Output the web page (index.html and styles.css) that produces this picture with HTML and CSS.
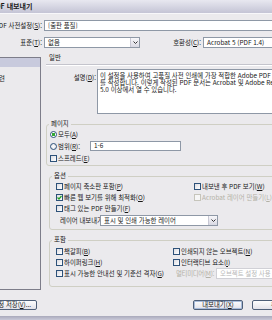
FILE: index.html
```html
<!DOCTYPE html>
<html lang="ko">
<head>
    <meta charset="UTF-8">
    <title>Adobe PDF 내보내기</title>
    <link rel="stylesheet" href="styles.css">
</head>
<body>
    <div class="dialog">
        <div class="titlebar">Adobe PDF 내보내기</div>
        <div class="head-row preset-row">
            <label class="head-label">Adobe PDF 사전설정(<u>S</u>):</label>
            <div class="textbox preset">[출판 품질]</div>
        </div>
        <div class="head-row std-row">
            <label class="head-label">표준(<u>T</u>):</label>
            <div class="select standard">
                <span class="select-text">없음</span>
                <span class="select-btn"><svg width="5" height="3" viewBox="0 0 5 3"><path d="M0.5 0.5 L2.5 2.5 L4.5 0.5" fill="none" stroke="#333" stroke-width="1"/></svg></span>
            </div>
            <label class="compat-label">호환성(<u>C</u>):</label>
            <div class="select compat">
                <span class="select-text">Acrobat 5 (PDF 1.4)</span>
                <span class="select-btn"><svg width="5" height="3" viewBox="0 0 5 3"><path d="M0.5 0.5 L2.5 2.5 L4.5 0.5" fill="none" stroke="#333" stroke-width="1"/></svg></span>
            </div>
        </div>
        <div class="main">
            <ul class="nav">
                <li class="selected">일반</li>
                <li>압축</li>
                <li>표시 및 도련</li>
                <li>출력</li>
                <li>고급</li>
                <li>보안</li>
                <li>요약</li>
            </ul>
            <div class="pane">
                <div class="pane-title">일반</div>
                <div class="desc-row">
                    <label class="desc-label">설명(<u>D</u>):</label>
                    <div class="textarea">이 설정을 사용하여 고품질 사전 인쇄에 가장 적합한 Adobe PDF 문서<br>를 작성합니다. 이렇게 작성된 PDF 문서는 Acrobat 및 Adobe Reader<br>5.0 이상에서 열 수 있습니다.</div>
                </div>
                <fieldset class="group pages">
                    <legend>페이지</legend>
                    <div class="prow"><span class="radio on"></span>모두(<u>A</u>)</div>
                    <div class="prow"><span class="radio"></span><span class="range-label">범위(<u>R</u>):</span><div class="textbox range">1-6</div></div>
                    <div class="prow"><span class="check"></span>스프레드(<u>E</u>)</div>
                </fieldset>
                <fieldset class="group options">
                    <legend>옵션</legend>
                    <div class="opt-grid">
                        <div class="opt"><span class="check"></span>페이지 축소판 포함(<u>P</u>)</div>
                        <div class="opt"><span class="check"></span>내보낸 후 PDF 보기(<u>W</u>)</div>
                        <div class="opt"><span class="check"><svg width="5" height="5" viewBox="0 0 5 5"><path d="M0.5 2.5 L2 4 L4.5 1" fill="none" stroke="#21a121" stroke-width="1.2"/></svg></span>빠른 웹 보기를 위해 최적화(<u>O</u>)</div>
                        <div class="opt disabled"><span class="check"></span>Acrobat 레이어 만들기(<u>L</u>)</div>
                        <div class="opt first-col"><span class="check"></span>태그 있는 PDF 만들기(<u>F</u>)</div>
                        <div class="opt layer-row">
                            <span class="layer-label">레이어 내보내기:</span>
                            <div class="select layers">
                                <span class="select-text">표시 및 인쇄 가능한 레이어</span>
                                <span class="select-btn"><svg width="5" height="3" viewBox="0 0 5 3"><path d="M0.5 0.5 L2.5 2.5 L4.5 0.5" fill="none" stroke="#333" stroke-width="1"/></svg></span>
                            </div>
                        </div>
                    </div>
                </fieldset>
                <fieldset class="group include">
                    <legend>포함</legend>
                    <div class="inc-grid">
                        <div class="opt"><span class="check"></span>책갈피(<u>B</u>)</div>
                        <div class="opt"><span class="check"></span>인쇄되지 않는 오브젝트(<u>N</u>)</div>
                        <div class="opt"><span class="check"></span>하이퍼링크(<u>H</u>)</div>
                        <div class="opt"><span class="check"></span>인터랙티브 요소(<u>I</u>)</div>
                        <div class="opt"><span class="check"></span>표시 가능한 안내선 및 기준선 격자(<u>G</u>)</div>
                        <div class="opt disabled">
                            <span class="media-label">멀티미디어(<u>M</u>):</span>
                            <div class="select media">
                                <span class="select-text">오브젝트 설정 사용</span>
                                <span class="select-btn"></span>
                            </div>
                        </div>
                    </div>
                </fieldset>
            </div>
        </div>
        <div class="footer">
            <button class="btn save">사전 설정 저장(<u>V</u>)...</button>
            <button class="btn export default">내보내기(<u>X</u>)</button>
            <button class="btn cancel">취소</button>
        </div>
        <div class="frame-bottom"></div>
    </div>
</body>
</html>
```

FILE: styles.css
```css
html, body {
    margin: 0;
    padding: 0;
    overflow: hidden;
    background-color: #ebeaed;
}
.dialog {
    width: 350px;
    height: 320px;
    margin-left: -40px;
    display: flex;
    flex-direction: column;
    font-family: "Noto Sans CJK KR", "Noto Sans", sans-serif;
    font-size: 6.4px;
    color: #161616;
    background-color: #ebeaed;
}
.titlebar {
    height: 13px;
    line-height: 13px;
    padding-left: 7px;
    font-size: 7px;
    font-weight: bold;
    color: #1a1a1a;
    background: linear-gradient(#e8e8f0, #c4c4d5);
    border-bottom: 1px solid #f7f7fa;
    flex: none;
}
.head-row {
    display: flex;
    align-items: center;
    height: 11px;
    margin-top: 6px;
    flex: none;
}
.head-label {
    width: 84px;
    text-align: right;
    padding-right: 2px;
    box-sizing: border-box;
    white-space: nowrap;
}
.textbox {
    background-color: #fff;
    border: 1px solid #8e98a6;
    height: 11px;
    box-sizing: border-box;
    line-height: 9px;
    padding-left: 3px;
    white-space: nowrap;
}
.preset {
    flex: 1;
    margin-right: 4px;
}
.select {
    display: flex;
    height: 11px;
    box-sizing: border-box;
    background-color: #fff;
    border: 1px solid #8e98a6;
    white-space: nowrap;
}
.select-text {
    flex: 1;
    padding-left: 3px;
    line-height: 9px;
    overflow: hidden;
}
.select-btn {
    width: 8px;
    display: flex;
    align-items: center;
    justify-content: center;
    background: linear-gradient(#f7f7fa, #d9d9e3);
    border-left: 1px solid #c8c8d4;
}
.standard {
    width: 96px;
}
.compat-label {
    width: 63px;
    text-align: right;
    padding-right: 2px;
    box-sizing: border-box;
    white-space: nowrap;
}
.compat {
    flex: 1;
    margin-right: 4px;
}
.main {
    display: flex;
    margin-top: 4px;
    height: 240px;
    flex: none;
}
.nav {
    list-style: none;
    margin: 5px 0 0 8px;
    padding: 0;
    width: 73px;
    height: 233px;
    box-sizing: border-box;
    border: 1px solid #7d7d8a;
}
.nav li {
    height: 8.5px;
    line-height: 8.5px;
    padding-left: 3px;
    white-space: nowrap;
}
.nav li.selected {
    background-color: #c8cadd;
}
.pane {
    flex: 1;
    margin-left: 5px;
}
.pane-title {
    height: 12px;
    line-height: 12px;
    padding-left: 3px;
    border-bottom: 1px solid #c4c4cc;
    box-shadow: 0 1px 0 #fff;
}
.desc-row {
    display: flex;
    margin-top: 4px;
}
.desc-label {
    width: 51px;
    text-align: right;
    padding: 4px 1px 0 0;
    box-sizing: border-box;
    white-space: nowrap;
}
.textarea {
    flex: 1;
    height: 45px;
    box-sizing: border-box;
    background-color: #fff;
    border: 1px solid #8e98a6;
    padding: 2px 2px;
    line-height: 7px;
    white-space: nowrap;
    overflow: hidden;
    margin-right: 4px;
}
.group {
    margin: 6px 4px 0 0;
    padding: 0;
    border: 1px solid #cfcfc4;
    border-radius: 3px;
    min-width: 0;
}
.group legend {
    padding: 0 2px;
    margin-left: 2px;
    line-height: 8px;
}
.options, .include {
    margin-left: 3px;
}
.pages {
    padding-bottom: 1px;
}
.prow {
    height: 12px;
    display: flex;
    align-items: center;
    padding-left: 3px;
    white-space: nowrap;
}
.radio {
    width: 7px;
    height: 7px;
    border-radius: 50%;
    border: 1px solid #2d5179;
    box-sizing: border-box;
    background: radial-gradient(#fff, #dedee4);
    margin-right: 1px;
    flex: none;
}
.radio.on {
    background: radial-gradient(circle, #34a834 0 1.5px, #fff 2px);
}
.range-label {
    width: 32px;
}
.range {
    width: 91px;
    height: 10px;
    line-height: 8px;
}
.check {
    width: 7px;
    height: 7px;
    border: 1px solid #2d5179;
    box-sizing: border-box;
    background: linear-gradient(135deg, #dcdce2, #fff);
    margin-right: 1px;
    flex: none;
    display: flex;
    align-items: center;
    justify-content: center;
}
.opt {
    display: flex;
    align-items: center;
    white-space: nowrap;
}
.opt.disabled {
    color: #b3b1a6;
}
.opt.disabled .check {
    border-color: #c6c5bb;
    background: #f6f6f6;
}
.opt-grid {
    display: grid;
    grid-template-columns: 138px 1fr;
    grid-auto-rows: 11px;
    padding: 1px 0 4px 6px;
}
.first-col {
    grid-column: 1;
}
.layer-row {
    grid-column: 1 / -1;
    height: 12px;
}
.layer-label {
    width: 44px;
    padding-left: 4px;
    box-sizing: border-box;
}
.layers {
    width: 118px;
}
.inc-grid {
    display: grid;
    grid-template-columns: 117px 1fr;
    grid-auto-rows: 11px;
    padding: 1.5px 0 7px 6px;
}
.media-label {
    padding: 0 2px 0 3px;
    letter-spacing: -0.3px;
}
.media {
    flex: 1;
    border-color: #d0d0d6;
    color: #b8b8b8;
}
.media .select-btn {
    background: #f2f2f4;
    border-left-color: #e0e0e4;
}
.footer {
    display: flex;
    margin-top: 8px;
    height: 10px;
    flex: none;
}
.btn {
    height: 10px;
    box-sizing: border-box;
    border: 1px solid #4e5f78;
    border-radius: 2px;
    background: linear-gradient(#fdfdfd, #e2e2e9);
    line-height: 8px;
    padding: 0;
    font-family: inherit;
    font-size: 6.4px;
    color: #161616;
    white-space: nowrap;
}
.save {
    width: 77px;
    text-align: right;
    padding-right: 5px;
}
.export {
    width: 50px;
    margin-left: auto;
}
.btn.default {
    box-shadow: inset 0 0 0 1px #a9bddb;
}
.cancel {
    width: 50px;
    margin: 0 8px 0 9px;
}
.frame-bottom {
    margin-top: 6px;
    height: 4px;
    flex: none;
    background: linear-gradient(#a9a9bb, #c9c9d8);
}
```
